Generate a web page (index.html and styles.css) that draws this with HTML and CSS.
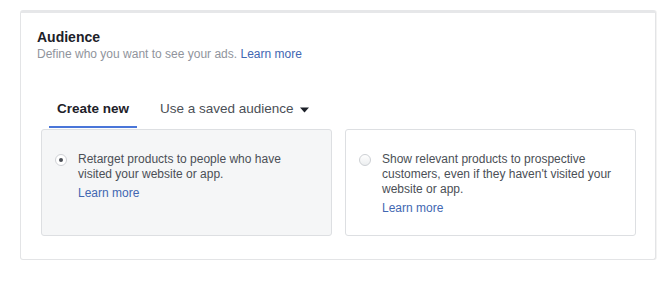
FILE: index.html
```html
<!DOCTYPE html>
<html>
<head>
<meta charset="utf-8">
<link rel="stylesheet" href="styles.css">
</head>
<body>
<section class="card">
  <header class="head">
    <h2 class="title">Audience</h2>
    <p class="sub">Define who you want to see your ads. <a class="link">Learn more</a></p>
  </header>
  <nav class="tabs">
    <div class="tab active">Create new</div>
    <div class="tab">Use a saved audience <svg class="caret" width="9" height="6" viewBox="0 0 9 6"><path d="M0 0.5h9L4.5 5.5z" fill="#1d2129"/></svg></div>
  </nav>
  <div class="options">
    <label class="opt selected">
      <span class="radio on"></span>
      <span class="opt-text">Retarget products to people who have visited your website or app.<a class="link more">Learn more</a></span>
    </label>
    <label class="opt">
      <span class="radio"></span>
      <span class="opt-text">Show relevant products to prospective customers, even if they haven't visited your website or app.<a class="link more">Learn more</a></span>
    </label>
  </div>
</section>
</body>
</html>
```
FILE: styles.css
```css
* { box-sizing: border-box; }
body {
  margin: 0;
  padding: 10px 14px 0 20px;
  background: #fff;
  font-family: "Liberation Sans", Arial, Helvetica, sans-serif;
  color: #1d2129;
}
.card {
  width: 636px;
  height: 250px;
  border: 1px solid #e3e4e6;
  border-top: 3px solid #e6e7e9;
  border-radius: 3px;
  background: #fff;
  box-shadow: 1px 0 0 #f3f3f3;
}
.head { padding: 15px 16px 0 16px; }
.title {
  margin: 0;
  font-size: 14px;
  line-height: 18px;
  font-weight: bold;
  color: #1d2129;
}
.sub {
  margin: 0;
  font-size: 12px;
  line-height: 16px;
  color: #90949c;
}
.link { color: #4267b2; text-decoration: none; }
.tabs {
  display: flex;
  gap: 15px;
  padding: 0 0 0 28px;
  margin-top: 36px;
}
.tab {
  padding: 2px 8px 8px;
  font-size: 13.5px;
  line-height: 18px;
  color: #4b4f56;
  border-bottom: 2px solid transparent;
  display: flex;
  align-items: center;
  gap: 6px;
}
.tab.active {
  font-weight: bold;
  color: #1d2129;
  border-bottom-color: #4a76d9;
}
.caret { display: block; margin-top: 1px; }
.options {
  display: flex;
  gap: 13px;
  padding: 0 19px 0 20px;
  margin-top: 1px;
}
.opt {
  flex: 1;
  height: 107px;
  border: 1px solid #dddfe2;
  border-radius: 3px;
  background: #fff;
  display: flex;
  align-items: flex-start;
  gap: 11px;
  padding: 22px 14px 0 13px;
}
.opt.selected { background: #f5f6f7; }
.radio {
  flex: none;
  width: 12px;
  height: 12px;
  margin-top: 2px;
  border-radius: 50%;
  border: 1px solid #cdd0d4;
  background: linear-gradient(#ffffff, #eceef0);
  display: flex;
  align-items: center;
  justify-content: center;
}
.radio.on { background: #fff; border-color: #cfd1d5; }
.radio.on::after {
  content: "";
  width: 4px;
  height: 4px;
  border-radius: 50%;
  background: #4b4f56;
}
.opt-text {
  font-size: 12px;
  line-height: 15px;
  color: #4b4f56;
  max-width: 245px;
}
.more { display: block; margin-top: 4px; }
```
